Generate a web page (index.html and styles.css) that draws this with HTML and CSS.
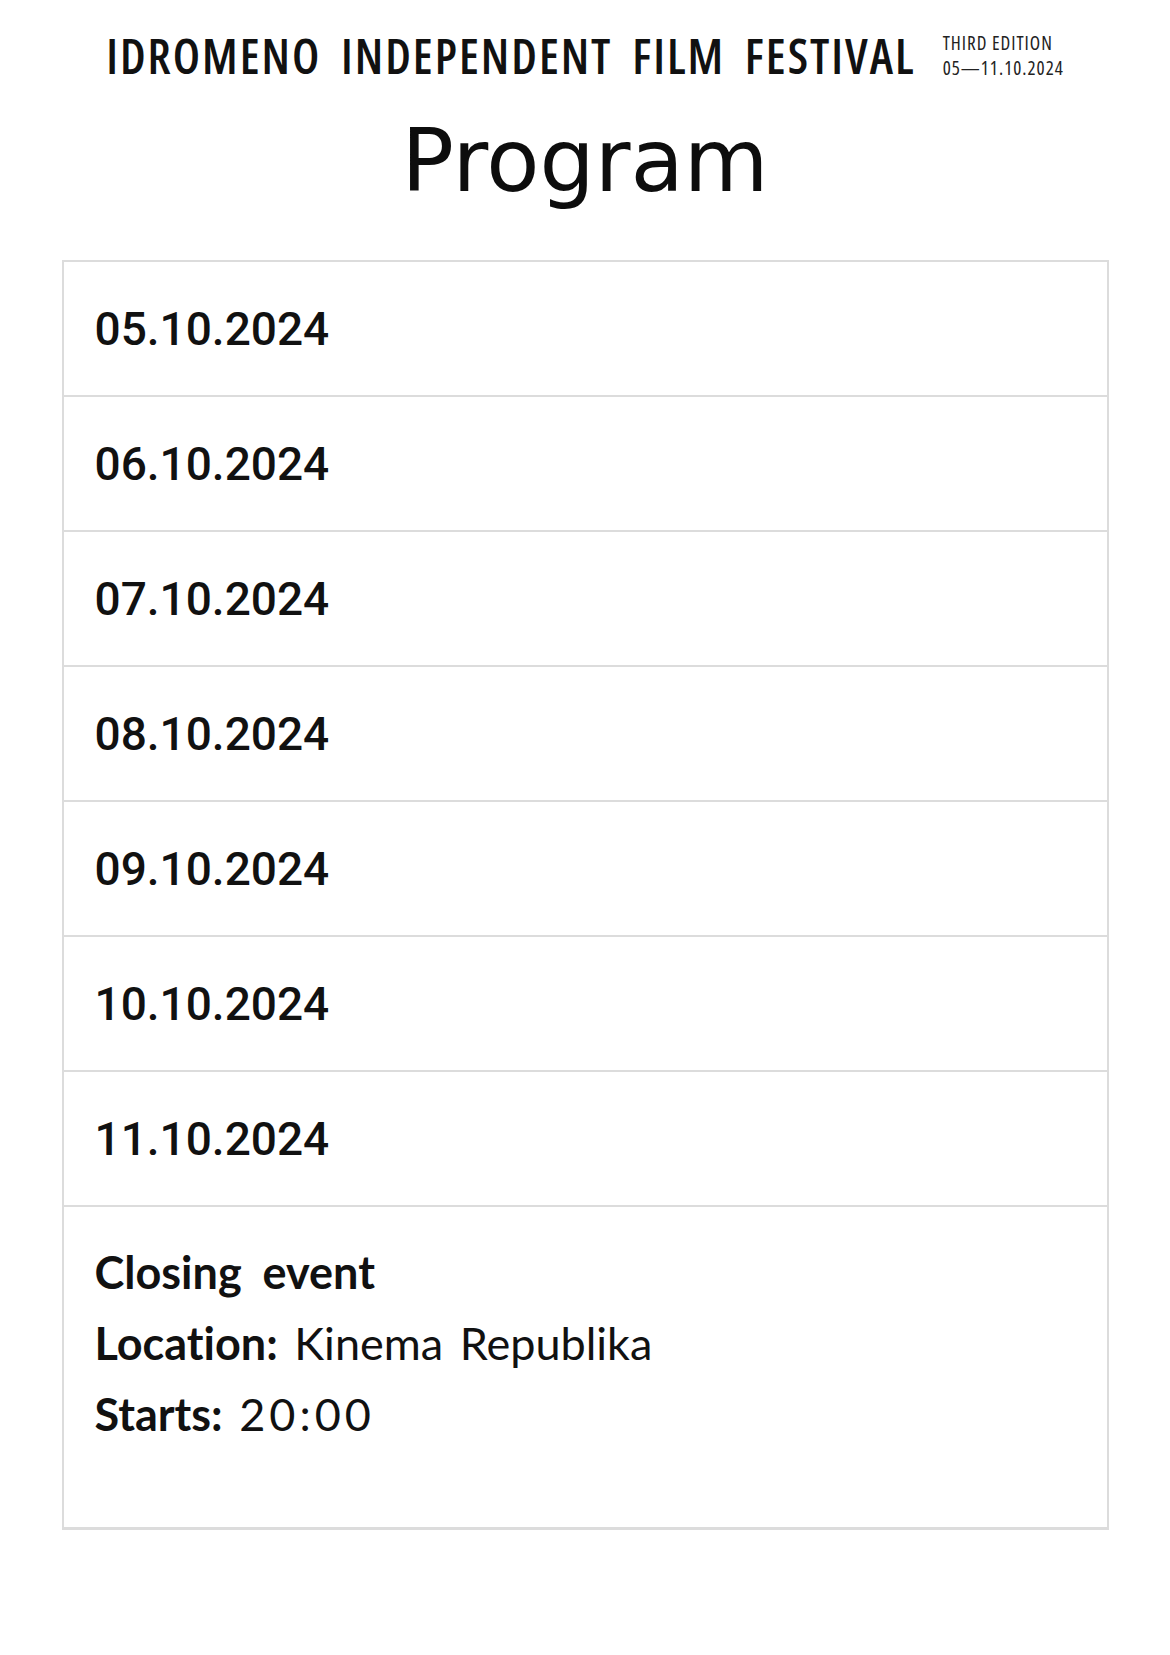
FILE: index.html
```html
<!DOCTYPE html>
<html lang="en">
<head>
<meta charset="utf-8">
<title>Program</title>
<link rel="stylesheet" href="styles.css">
</head>
<body>
<header class="festival">
  <span class="festival-name">IDROMENO INDEPENDENT FILM FESTIVAL</span>
  <span class="festival-meta">
    <span class="meta-line">THIRD EDITION</span>
    <span class="meta-line">05—11.10.2024</span>
  </span>
</header>
<h1 class="page-title">Program</h1>
<ul class="program">
  <li class="day">05.10.2024</li>
  <li class="day">06.10.2024</li>
  <li class="day">07.10.2024</li>
  <li class="day">08.10.2024</li>
  <li class="day">09.10.2024</li>
  <li class="day">10.10.2024</li>
  <li class="day">11.10.2024</li>
  <li class="event">
    <div class="event-title">Closing event</div>
    <div class="event-line"><b>Location:</b> <span class="value">Kinema Republika</span></div>
    <div class="event-line"><b>Starts:</b> <span class="value value-time">20:00</span></div>
  </li>
</ul>
</body>
</html>
```

FILE: styles.css
```css
html, body {
  margin: 0;
  padding: 0;
  background: #ffffff;
  color: #111111;
}

body {
  font-family: "Lato", "Liberation Sans", sans-serif;
}

.festival {
  display: flex;
  justify-content: center;
  align-items: center;
  gap: 27px;
  padding-top: 28px;
  height: 56px;
}

.festival-name {
  font-family: "Open Sans", sans-serif;
  font-stretch: 75%;
  font-weight: 600;
  font-size: 48px;
  line-height: 1;
  letter-spacing: 2px;
  word-spacing: 9px;
  color: #111;
}

.festival-meta {
  display: flex;
  flex-direction: column;
  font-family: "Open Sans", sans-serif;
  font-stretch: 75%;
  font-size: 19px;
  letter-spacing: 1px;
  color: #222;
}

.meta-line {
  display: block;
  line-height: 25px;
  white-space: nowrap;
}

.page-title {
  margin: 0;
  text-align: center;
  font-family: "DejaVu Sans", sans-serif;
  font-weight: 400;
  font-size: 87px;
  line-height: 100px;
  margin-top: 27px;
  color: #0d0d0d;
}

.program {
  list-style: none;
  margin: 49px auto 0;
  padding: 0;
  width: 1043px;
  border: 2px solid #dcdcdc;
  border-bottom-width: 3px;
}

.day {
  height: 133px;
  border-bottom: 2px solid #dcdcdc;
  display: flex;
  align-items: center;
  padding-left: 31px;
  font-family: "Roboto", sans-serif;
  font-weight: 500;
  font-size: 46px;
  color: #111;
}

.event {
  height: 320px;
  padding: 30px 0 0 31px;
  box-sizing: border-box;
  font-family: "Lato", sans-serif;
  font-variant-ligatures: none;
  font-size: 45px;
  line-height: 71px;
  word-spacing: 5px;
  color: #111;
}

.event-title {
  font-weight: 700;
  word-spacing: 10px;
}

.event-line {
  font-weight: 400;
}

.event-line b {
  font-weight: 700;
}

.value-time {
  letter-spacing: 4px;
}
```
